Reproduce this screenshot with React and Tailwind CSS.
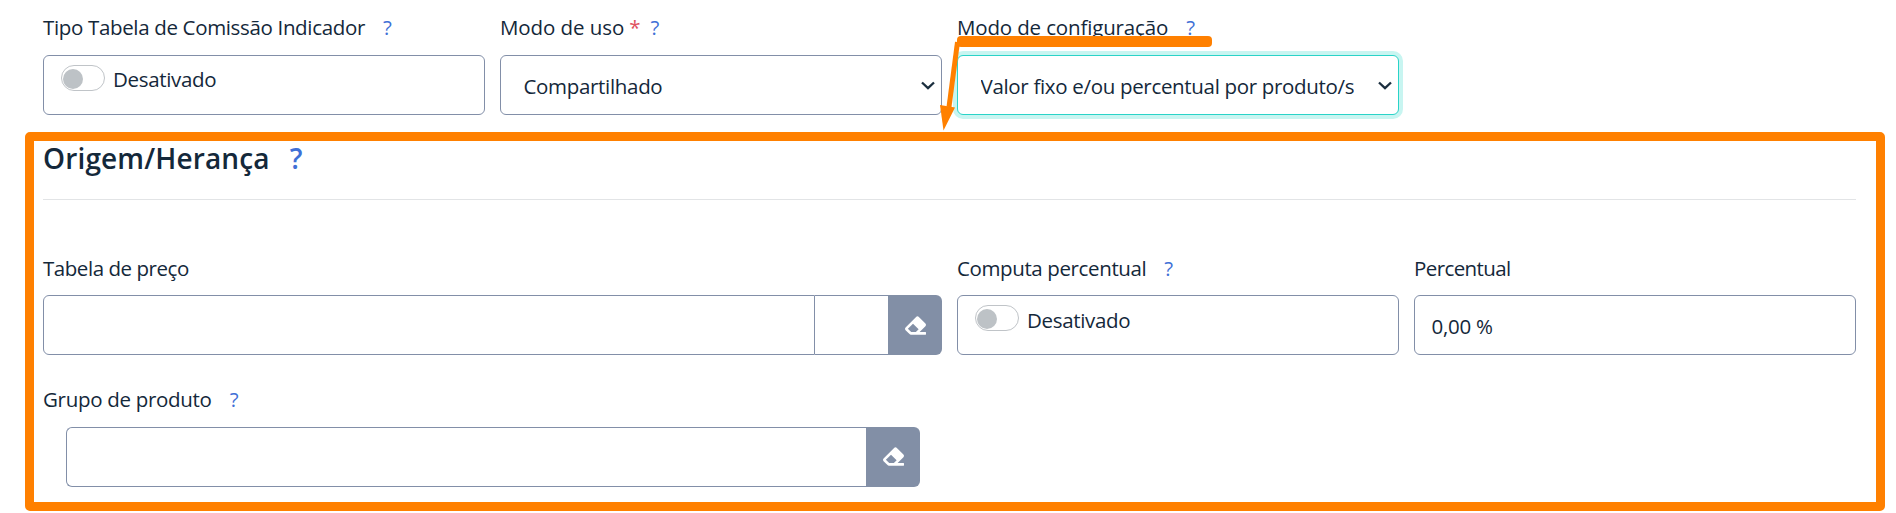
import { FaEraser } from "react-icons/fa";

function Help({ className = "" }) {
  return <span className={`text-[#3f70d6] ${className}`}>?</span>;
}

function Field({ label, children, className = "", labelClass = "h-[41px]" }) {
  return (
    <div className={`flex min-w-0 flex-col ${className}`}>
      <label className={`flex whitespace-pre leading-[28px] ${labelClass}`}>{label}</label>
      {children}
    </div>
  );
}

function Box({ children, className = "border-[#828fa8]" }) {
  return <div className={`flex h-[60px] rounded-md border bg-white ${className}`}>{children}</div>;
}

function Toggle({ textClass }) {
  return (
    <Box>
      <span className="mt-[9px] ml-[17px] flex h-[26px] w-11 items-center rounded-full border border-[#c0c4c8] pt-px pl-px">
        <span className="size-5 rounded-full bg-[#bdc2c6]" />
      </span>
      <span className={`ml-2 h-7 leading-7 tracking-[-0.32px] ${textClass}`}>Desativado</span>
    </Box>
  );
}

function Select({ children, className }) {
  return (
    <Box className={className}>
      <span className="mt-4 ml-[22.5px] h-7 w-[373.5px] overflow-hidden whitespace-nowrap leading-7 tracking-[-0.32px]">
        {children}
      </span>
      <svg className="mt-[25px] ml-6 h-[9px] w-[14px]" viewBox="0 0 14 9" fill="none" stroke="#1b2f3f" strokeWidth="2.3">
        <path d="M1 1.5 7 7.2l6-5.7" />
      </svg>
    </Box>
  );
}

function ClearButton({ className = "" }) {
  return (
    <button className={`flex w-[54px] items-center justify-center rounded-r-md bg-[#828fa6] text-white ${className}`}>
      <FaEraser className="ml-px size-[21px]" />
    </button>
  );
}

export default function App() {
  return (
    <div className="relative h-[513px] w-[1896px] overflow-hidden bg-white font-['Open_Sans','Noto_Sans',sans-serif] text-[20.5px] font-[370] text-[#14283a]">
      <div className="grid grid-cols-4 gap-x-[15px] pt-[13px] pr-10 pl-[43px]">
        <Field labelClass="h-[42px]" label={<><span className="tracking-[-0.34px]">Tipo Tabela de Comissão Indicador</span><Help className="ml-[18px]" /></>}>
          <Toggle textClass="mt-[9px]" />
        </Field>
        <Field
          labelClass="h-[42px]"
          label={
            <>
              <span className="tracking-[-0.08px]">Modo de uso</span>
              <span className="ml-[5px] text-[#e0525f]">*</span>
              <Help className="ml-[10px]" />
            </>
          }
        >
          <Select className="border-[#828fa8]">Compartilhado</Select>
        </Field>
        <Field labelClass="h-[42px]" label={<><span className="tracking-[-0.15px]">Modo de configuração</span><Help className="ml-[18px]" /></>}>
          <Select className="border-[#2ad3c8] ring-4 ring-[#c8f5f1]">Valor fixo e/ou percentual por produto/s</Select>
        </Field>
      </div>

      <div className="mr-10 ml-[43px] h-[85px] border-b border-[#e2e4e6] pt-6">
        <h2 className="flex text-[28px] leading-[38px] font-semibold">
          <span className="tracking-[0.15px]">Origem/Herança</span>
          <Help className="ml-5" />
        </h2>
      </div>

      <div className="grid grid-cols-4 gap-x-[15px] pt-[54px] pr-10 pl-[43px]">
        <Field className="col-span-2" label={<span className="tracking-[-0.45px]">Tabela de preço</span>}>
          <div className="flex h-[60px]">
            <div className="flex-1 rounded-l-md border border-[#828fa8]" />
            <div className="w-[73px] border-y border-[#828fa8]" />
            <ClearButton />
          </div>
        </Field>
        <Field label={<><span className="tracking-[-0.38px]">Computa percentual</span><Help className="ml-[18px]" /></>}>
          <Toggle textClass="mt-[10px]" />
        </Field>
        <Field label={<span className="tracking-[-0.6px]">Percentual</span>}>
          <Box>
            <span className="mt-4 ml-[16.5px] leading-7 tracking-[-0.25px]">0,00 %</span>
          </Box>
        </Field>
      </div>

      <div className="w-[920px] pt-[30px] pl-[43px]">
        <Field labelClass="h-[42px]" label={<><span className="tracking-[-0.3px]">Grupo de produto</span><Help className="ml-[18px]" /></>}>
          <div className="ml-[23px] flex h-[60px]">
            <div className="flex-1 rounded-l-md border border-r-0 border-[#828fa8]" />
            <ClearButton className="pb-[2px]" />
          </div>
        </Field>
      </div>

      <div className="pointer-events-none absolute top-[132px] left-[25px] h-[379px] w-[1860px] rounded-[5px] border-9 border-[#ff8000]" />
      <svg className="pointer-events-none absolute top-[30px] left-[930px] h-[105px] w-[300px]" viewBox="930 30 300 105" fill="#ff8000">
        <rect x="957" y="36" width="255" height="11" rx="4" />
        <path d="M957.5 42 949 107" stroke="#ff8000" strokeWidth="5" />
        <path d="M940 105 955 107.5 943.5 130.5z" />
      </svg>
    </div>
  );
}
